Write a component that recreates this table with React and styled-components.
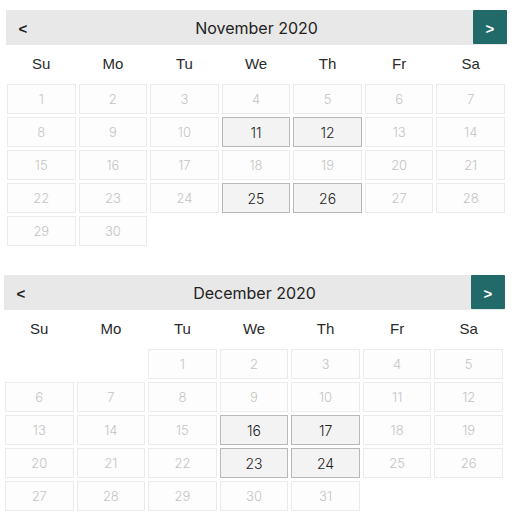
import React from "react";
import styled, { createGlobalStyle } from "styled-components";

const GlobalStyle = createGlobalStyle`
  body {
    margin: 0;
    background: #ffffff;
    font-family: "Liberation Sans", Arial, sans-serif;
  }
`;

const WEEKDAYS = ["Su", "Mo", "Tu", "We", "Th", "Fr", "Sa"];

// months to show: first weekday offset, day count, highlighted days
const months = [
  { title: "November 2020", offset: 0, days: 30, marked: [11, 12, 25, 26], left: 6 },
  { title: "December 2020", offset: 2, days: 31, marked: [16, 17, 23, 24], left: 4 },
];

const Calendar = ({ month }) => {
  const cells = [];
  for (let i = 0; i < month.offset; i++) cells.push(null);
  for (let d = 1; d <= month.days; d++) cells.push(d);

  return (
    <Panel left={month.left}>
      <Header>
        <NavButton>&lt;</NavButton>
        <Title>{month.title}</Title>
        <NavButton primary>&gt;</NavButton>
      </Header>
      <Grid>
        {WEEKDAYS.map((w) => (
          <Weekday key={w}>{w}</Weekday>
        ))}
        {cells.map((d, i) =>
          d === null ? (
            <Blank key={"b" + i} />
          ) : (
            <Day key={d} marked={month.marked.includes(d)}>
              {d}
            </Day>
          )
        )}
      </Grid>
    </Panel>
  );
};

const App = () => {
  return (
    <React.Fragment>
      <GlobalStyle />
      <Page>
        {months.map((m) => (
          <Calendar key={m.title} month={m} />
        ))}
      </Page>
    </React.Fragment>
  );
};

export default App;

const Page = styled.div`
  display: flex;
  flex-direction: column;
  gap: 29px;
  padding-top: 10px;
`;

const Panel = styled.div`
  width: 501px;
  margin-left: ${({ left }) => left}px;
`;

const Header = styled.div`
  display: flex;
  align-items: stretch;
  height: 35px;
  background: #e8e8e8;
`;

const NavButton = styled.div`
  width: 34px;
  height: 34px;
  display: flex;
  align-items: center;
  justify-content: center;
  font-family: "Liberation Sans", Arial, sans-serif;
  font-weight: bold;
  font-size: 15px;
  padding-top: 3px;
  box-sizing: border-box;
  color: ${({ primary }) => (primary ? "#ffffff" : "#222222")};
  background: ${({ primary }) => (primary ? "#22696a" : "transparent")};
  border-radius: ${({ primary }) => (primary ? "1px" : "0")};
`;

const Title = styled.div`
  flex: 1;
  display: flex;
  align-items: center;
  justify-content: center;
  font-family: Inter, "Noto Sans", sans-serif;
  font-weight: 400;
  font-size: 16px;
  color: #222222;
`;

const Grid = styled.div`
  display: grid;
  grid-template-columns: repeat(7, 1fr);
  column-gap: 3px;
  row-gap: 3px;
  padding: 0 2px 0 1px;
`;

const Weekday = styled.div`
  height: 36px;
  display: flex;
  align-items: center;
  justify-content: center;
  font-size: 15px;
  color: #2a2a2a;
`;

const Blank = styled.div`
  height: 30px;
`;

const Day = styled.div`
  height: 30px;
  box-sizing: border-box;
  display: flex;
  align-items: center;
  justify-content: center;
  font-family: Inter, "Noto Sans", sans-serif;
  font-size: ${({ marked }) => (marked ? "14px" : "13px")};
  font-weight: 300;
  border: 1px solid ${({ marked }) => (marked ? "#b8b8b8" : "#ebebeb")};
  background: ${({ marked }) => (marked ? "#f3f3f3" : "#fdfdfd")};
  color: ${({ marked }) => (marked ? "#222222" : "#c4c4c4")};
`;
